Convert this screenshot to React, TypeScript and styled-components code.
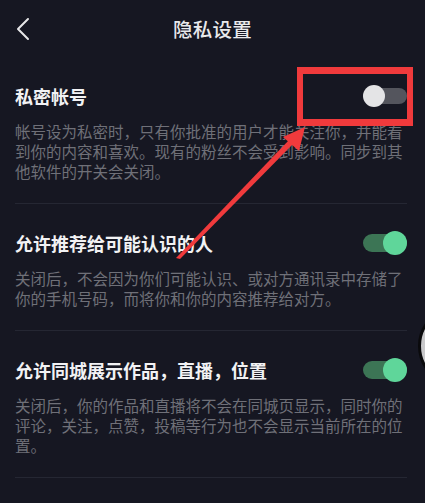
import styled, { createGlobalStyle } from "styled-components";

const GlobalStyle = createGlobalStyle`
  html, body {
    margin: 0;
    padding: 0;
    background: #161722;
    overflow: hidden;
  }
  * {
    box-sizing: border-box;
  }
`;

const Page = styled.div`
  position: relative;
  width: 425px;
  height: 503px;
  overflow: hidden;
  background: #161722;
  font-family: "Noto Sans CJK SC", "Noto Sans", sans-serif;
`;

const Header = styled.header`
  height: 57px;
  display: grid;
  grid-template-columns: 56px 1fr 56px;
  align-items: center;
`;

const BackButton = styled.div`
  display: flex;
  align-items: center;
  padding-left: 15px;
  height: 100%;
`;

const Title = styled.h1`
  margin: 0;
  text-align: center;
  font-size: 19.5px;
  font-weight: 500;
  color: #e9e9ec;
  letter-spacing: 0.3px;
`;

const Section = styled.section`
  margin: 0 18px 0 15px;
  padding: 25px 0 22px;
  border-bottom: 1px solid #252733;
`;

const Row = styled.div`
  display: flex;
  align-items: center;
  justify-content: space-between;
  height: 28px;
`;

const ItemTitle = styled.div`
  font-size: 18px;
  font-weight: 700;
  color: #f2f2f4;
`;

const Desc = styled.p`
  margin: 11px 0 0;
  font-size: 15.5px;
  line-height: 20px;
  color: #6f7078;
  white-space: pre-line;
`;

const Switch = styled.div`
  position: relative;
  width: 44px;
  height: 24px;
  flex-shrink: 0;
`;

const Track = styled.div<{ $on: boolean }>`
  position: absolute;
  top: ${(p) => (p.$on ? "3px" : "4px")};
  bottom: ${(p) => (p.$on ? "3px" : "4px")};
  left: ${(p) => (p.$on ? "0" : "6px")};
  right: 0;
  border-radius: 10px;
  background: ${(p) => (p.$on ? "#3c7555" : "#54555d")};
`;

const Knob = styled.div<{ $on: boolean }>`
  position: absolute;
  top: ${(p) => (p.$on ? "0" : "1px")};
  width: ${(p) => (p.$on ? "24px" : "22px")};
  height: ${(p) => (p.$on ? "24px" : "22px")};
  border-radius: 50%;
  left: ${(p) => (p.$on ? "20px" : "0")};
  background: ${(p) => (p.$on ? "#5fd69a" : "#e4e4e6")};
`;

const RedBox = styled.div`
  position: absolute;
  left: 297px;
  top: 67px;
  width: 116px;
  height: 59px;
  border: 7px solid #f03a3c;
  border-left-width: 6px;
  border-right-width: 6px;
`;

const Arrow = styled.svg`
  position: absolute;
  left: 0;
  top: 0;
  pointer-events: none;
`;

const Bubble = styled.div`
  position: absolute;
  left: 418px;
  top: 306px;
  width: 80px;
  height: 80px;
  border-radius: 50%;
  background: #c9c9cb;
  border: 3px solid #0a0a0c;
`;

function Toggle({ on }: { on: boolean }) {
  return (
    <Switch>
      <Track $on={on} />
      <Knob $on={on} />
    </Switch>
  );
}

const items = [
  {
    title: "私密帐号",
    desc: "帐号设为私密时，只有你批准的用户才能关注你，并能看到你的内容和喜欢。现有的粉丝不会受到影响。同步到其他软件的开关会关闭。",
    on: false,
  },
  {
    title: "允许推荐给可能认识的人",
    desc: "关闭后，不会因为你们可能认识、或对方通讯录中存储了你的手机号码，而将你和你的内容推荐给对方。",
    on: true,
  },
  {
    title: "允许同城展示作品，直播，位置",
    desc: "关闭后，你的作品和直播将不会在同城页显示，同时你的评论，关注，点赞，投稿等行为也不会显示当前所在的位\n置。",
    on: true,
  },
  {
    title: "允许下载我的作品",
    desc: "",
    on: false,
  },
];

export default function App() {
  return (
    <Page>
      <GlobalStyle />
      <Header>
        <BackButton>
          <svg width="16" height="24" viewBox="0 0 16 24">
            <polyline
              points="13,2 3,12 13,22"
              fill="none"
              stroke="#e6e6e8"
              strokeWidth="2"
              strokeLinecap="round"
              strokeLinejoin="round"
            />
          </svg>
        </BackButton>
        <Title>隐私设置</Title>
        <div />
      </Header>
      {items.map((it) => (
        <Section key={it.title}>
          <Row>
            <ItemTitle>{it.title}</ItemTitle>
            <Toggle on={it.on} />
          </Row>
          {it.desc && <Desc>{it.desc}</Desc>}
        </Section>
      ))}
      <RedBox />
      <Arrow width="425" height="503" viewBox="0 0 425 503">
        <polygon points="176,258 180,259 294,143 290,139" fill="#f03a3c" />
        <polygon points="305,127 283,137 299,151" fill="#f03a3c" />
      </Arrow>
      <Bubble />
    </Page>
  );
}
